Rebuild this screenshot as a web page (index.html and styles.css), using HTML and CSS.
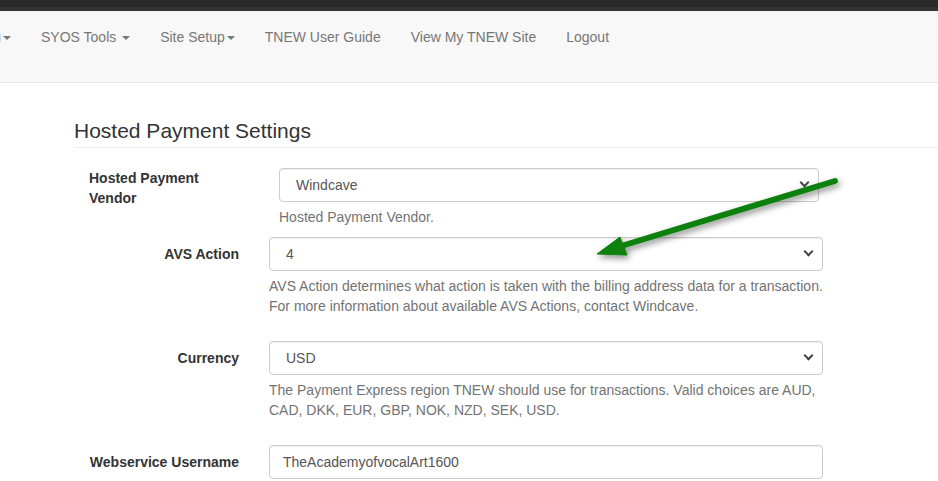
FILE: index.html
```html
<!DOCTYPE html>
<html lang="en">
<head>
    <meta charset="UTF-8">
    <meta name="viewport" content="width=device-width, initial-scale=1.0">
    <title>Hosted Payment Settings - TNEW</title>
    <link rel="stylesheet" href="styles.css">
</head>
<body>
    <div class="topbar"></div>
    <nav class="navbar">
        <ul class="nav">
            <li><a href="#">Menu<span class="caret"></span></a></li>
            <li><a href="#">SYOS Tools <span class="caret"></span></a></li>
            <li><a href="#">Site Setup<span class="caret"></span></a></li>
            <li><a href="#">TNEW User Guide</a></li>
            <li><a href="#">View My TNEW Site</a></li>
            <li><a href="#">Logout</a></li>
        </ul>
    </nav>

    <main class="content">
        <h1 class="page-header">Hosted Payment Settings</h1>

        <form class="settings">
            <div class="form-row form-row-vendor">
                <label class="form-label">Hosted Payment Vendor</label>
                <div class="form-field">
                    <div class="select-wrap">
                        <select class="form-control">
                            <option>Windcave</option>
                        </select>
                    </div>
                    <p class="help-block">Hosted Payment Vendor.</p>
                </div>
            </div>

            <div class="form-row">
                <label class="form-label">AVS Action</label>
                <div class="form-field">
                    <div class="select-wrap">
                        <select class="form-control">
                            <option>4</option>
                        </select>
                    </div>
                    <p class="help-block">AVS Action determines what action is taken with the billing address data for a transaction. For more information about available AVS Actions, contact Windcave.</p>
                </div>
            </div>

            <div class="form-row">
                <label class="form-label">Currency</label>
                <div class="form-field">
                    <div class="select-wrap">
                        <select class="form-control">
                            <option>USD</option>
                        </select>
                    </div>
                    <p class="help-block">The Payment Express region TNEW should use for transactions. Valid choices are AUD, CAD, DKK, EUR, GBP, NOK, NZD, SEK, USD.</p>
                </div>
            </div>

            <div class="form-row">
                <label class="form-label">Webservice Username</label>
                <div class="form-field">
                    <input class="form-control form-input" type="text" value="TheAcademyofvocalArt1600">
                </div>
            </div>
        </form>
    </main>

    <!-- annotation arrow drawn over the screenshot -->
    <svg class="annotation" width="938" height="481" viewBox="0 0 938 481">
        <defs>
            <filter id="shadow" x="-20%" y="-50%" width="140%" height="200%">
                <feDropShadow dx="2" dy="3" stdDeviation="3" flood-color="#000" flood-opacity="0.45"/>
            </filter>
        </defs>
        <g filter="url(#shadow)" fill="#0a800a" stroke="#0a800a">
            <line x1="835" y1="181" x2="618" y2="247" stroke-width="6" stroke-linecap="round"/>
            <polygon points="597,254 620,237 627,255" stroke-width="1" stroke-linejoin="round"/>
        </g>
    </svg>
</body>
</html>
```

FILE: styles.css
```css
body {
    margin: 0;
    font-family: "Liberation Sans", Arial, sans-serif;
    font-size: 14px;
    line-height: 20px;
    color: #333;
    background: #fff;
    position: relative;
    overflow: hidden;
}
.topbar {
    height: 7px;
    background: #2a2a2a;
    border-bottom: 4px solid #333;
}
.navbar {
    height: 71px;
    background: #f8f8f8;
    border-bottom: 1px solid #e7e7e7;
    overflow: hidden;
}
.nav {
    display: flex;
    margin: 0 0 0 -49px;
    padding: 0;
    list-style: none;
}
.nav a {
    display: block;
    padding: 16px 15px;
    color: #777;
    text-decoration: none;
    white-space: nowrap;
}
.caret {
    display: inline-block;
    width: 0;
    height: 0;
    margin-left: 2px;
    vertical-align: middle;
    border-top: 4px solid;
    border-left: 4px solid transparent;
    border-right: 4px solid transparent;
}
.content {
    padding-left: 74px;
}
.page-header {
    margin: 36px 0 0;
    padding-bottom: 5px;
    font-size: 21px;
    line-height: 23px;
    font-weight: 500;
    color: #333;
    border-bottom: 1px solid #eee;
}
.settings {
    margin-top: 20px;
    padding-left: 15px;
}
.form-row {
    display: flex;
    margin-bottom: 15px;
}
.form-label {
    width: 150px;
    flex: none;
    padding-top: 7px;
    text-align: right;
    font-weight: bold;
}
.form-field {
    width: 554px;
    margin-left: 30px;
}
.form-row-vendor {
    margin-bottom: 0;
}
.form-row-vendor .form-label {
    padding-top: 0;
    text-align: left;
}
.form-row-vendor .form-field {
    width: 540px;
    margin-left: 40px;
}
.select-wrap {
    position: relative;
}
.select-wrap::after {
    content: "";
    position: absolute;
    right: 11px;
    top: 11px;
    width: 5px;
    height: 5px;
    border-right: 2px solid #444;
    border-bottom: 2px solid #444;
    transform: rotate(45deg);
    pointer-events: none;
}
.form-control {
    display: block;
    width: 100%;
    height: 34px;
    box-sizing: border-box;
    padding: 6px 12px 6px 16px;
    font-family: inherit;
    font-size: 14px;
    color: #555;
    background: #fff;
    border: 1px solid #ccc;
    border-radius: 4px;
    box-shadow: inset 0 1px 1px rgba(0, 0, 0, .075);
    appearance: none;
    -webkit-appearance: none;
}
.form-input {
    padding-left: 13px;
}
.help-block {
    margin: 5px 0 10px;
    color: #737373;
}
.annotation {
    position: absolute;
    top: 0;
    left: 0;
    pointer-events: none;
}
```
